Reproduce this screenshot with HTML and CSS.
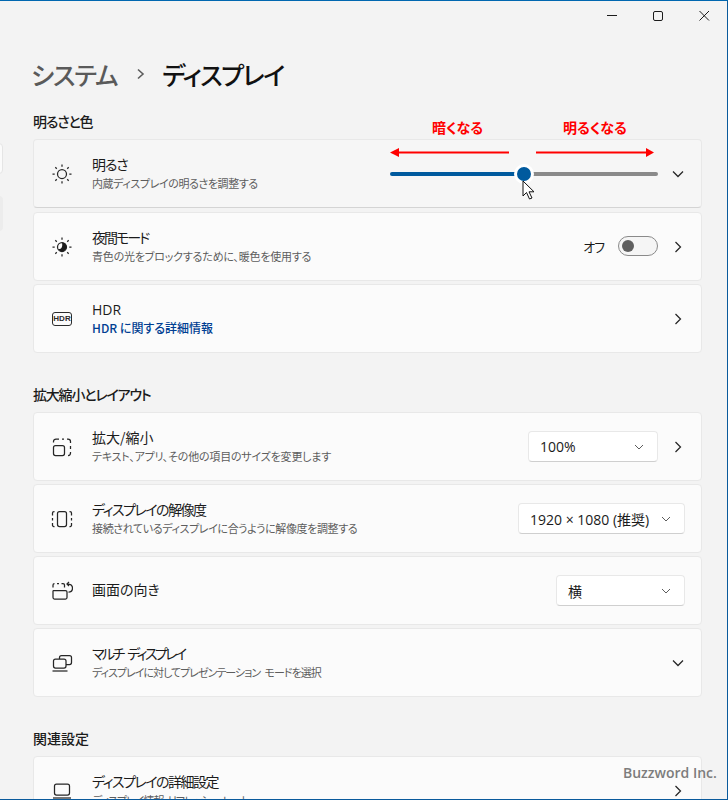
FILE: index.html
```html
<!DOCTYPE html>
<html lang="ja">
<head>
<meta charset="utf-8">
<title>ディスプレイ</title>
<link rel="stylesheet" href="styles.css">
</head>
<body>
<div class="window">
  <div class="side-a"></div>
  <div class="side-b"></div>
  <div class="titlebar">
    <svg class="wb" width="46" height="12" viewBox="0 0 46 12"><path d="M18 5.500h10" class="ln"/></svg>
    <svg class="wb" width="46" height="12" viewBox="0 0 46 12"><rect x="18.500" y="1.500" width="9" height="9" rx="1.500" class="ln"/></svg>
    <svg class="wb" width="46" height="12" viewBox="0 0 46 12"><path d="M18.500 1l9.500 9.500M28 1l-9.500 9.500" class="ln"/></svg>
  </div>
  <div class="crumb">
    <span class="crumb-parent">システム</span>
    <svg class="crumb-sep" width="10" height="12" viewBox="0 0 10 12"><path d="M2 1.500l5 4.500-5 4.500" class="ln2"/></svg>
    <span class="crumb-cur">ディスプレイ</span>
  </div>

  <h2 class="sec first k-sec1">明るさと色</h2>
  <div class="card card-hover">
    <svg class="ico" width="22" height="22" viewBox="0 0 22 22"><circle cx="11" cy="11" r="4.500" class="ic"/><path d="M11 1.500v2.200M11 18.300v2.200M1.500 11h2.200M18.300 11h2.200M4.300 4.300l1.500 1.500M16.200 16.200l1.500 1.500M4.300 17.700l1.500-1.500M16.200 5.800l1.500-1.500" class="ic"/></svg>
    <div class="txt"><div class="t k1">明るさ</div><div class="s k-s2">内蔵ディスプレイの明るさを調整する</div></div>
    <div class="slider">
      <div class="tr-on"></div><div class="tr-off"></div>
      <div class="thumb"></div>
    </div>
    <svg class="chev" width="12" height="12" viewBox="0 0 12 12"><path d="M1 3.500l5 5 5-5" class="ic"/></svg>
  </div>
  <div class="card">
    <svg class="ico" width="22" height="22" viewBox="0 0 22 22"><circle cx="11" cy="11" r="4.500" class="ic"/><path d="M11 6.500a4.500 4.500 0 0 1 0 9 4.500 4.500 0 0 1-4-2.500c3 .5 5-1.500 4-6.500z" fill="#1b1b1b"/><path d="M11 1.500v2.200M11 18.300v2.200M1.500 11h2.200M18.300 11h2.200M4.300 4.300l1.500 1.500M16.200 16.200l1.500 1.500M4.300 17.700l1.500-1.500M16.200 5.800l1.500-1.500" class="ic"/></svg>
    <div class="txt"><div class="t k2">夜間モード</div><div class="s k-s1">青色の光をブロックするために、暖色を使用する</div></div>
    <span class="off">オフ</span>
    <div class="toggle"><div class="knob"></div></div>
    <svg class="chev" width="12" height="12" viewBox="0 0 12 12"><path d="M3.500 1l5 5-5 5" class="ic"/></svg>
  </div>
  <div class="card">
    <div class="ico hdr">HDR</div>
    <div class="txt"><div class="t latin">HDR</div><div class="s link">HDR に関する詳細情報</div></div>
    <svg class="chev" width="12" height="12" viewBox="0 0 12 12"><path d="M3.500 1l5 5-5 5" class="ic"/></svg>
  </div>

  <h2 class="sec k-sec2">拡大縮小とレイアウト</h2>
  <div class="card">
    <svg class="ico" width="22" height="22" viewBox="0 0 22 22"><rect x="2.500" y="9.500" width="11" height="10" rx="2" class="ic"/><path d="M2.500 6.500v-1a2.500 2.500 0 0 1 2.500-2.500h3M11 3h2M16 3h1a2.500 2.500 0 0 1 2.500 2.500V7M19.500 10v3M19.500 16v1a2.500 2.500 0 0 1-2.500 2.500" class="ic"/></svg>
    <div class="txt"><div class="t">拡大/縮小</div><div class="s k-s1">テキスト、アプリ、その他の項目のサイズを変更します</div></div>
    <div class="dd dd-s"><span>100%</span><svg width="10" height="10" viewBox="0 0 10 10"><path d="M1 3l4 4 4-4" class="ic-g"/></svg></div>
    <svg class="chev" width="12" height="12" viewBox="0 0 12 12"><path d="M3.500 1l5 5-5 5" class="ic"/></svg>
  </div>
  <div class="card">
    <svg class="ico" width="22" height="22" viewBox="0 0 22 22"><rect x="6.500" y="3.500" width="9" height="15" rx="2" class="ic"/><path d="M3.500 3.500h-.5a1.500 1.500 0 0 0-1.500 1.500v2.500M1.500 10v2.500M1.500 15v1.500a1.500 1.500 0 0 0 1.500 2h.5M18.500 3.500h.5a1.500 1.500 0 0 1 1.500 1.500v2.500M20.500 10v2.500M20.500 15v1.500a1.500 1.500 0 0 1-1.500 2h-.5" class="ic"/></svg>
    <div class="txt"><div class="t k3">ディスプレイの解像度</div><div class="s k-s3">接続されているディスプレイに合うように解像度を調整する</div></div>
    <div class="dd dd-l"><span>1920 × 1080 (推奨)</span><svg width="10" height="10" viewBox="0 0 10 10"><path d="M1 3l4 4 4-4" class="ic-g"/></svg></div>
  </div>
  <div class="card card-dd">
    <svg class="ico" width="22" height="22" viewBox="0 0 22 22"><path d="M2.500 10.500h12a1.500 1.500 0 0 1 1.500 1.500v5.500a1.500 1.500 0 0 1-1.500 1.500h-11a1.500 1.500 0 0 1-1.500-1.500V11zM2 7.500V5a1.500 1.500 0 0 1 1.500-1.500M6 3.500h2M10.500 3.500h1.500a1.500 1.500 0 0 1 1.500 1.500v2.500M16.500 4c3.500 0 5 1.800 5 4s-1.500 4-4 4M18 2l-2 2 2 2" class="ic"/></svg>
    <div class="txt"><div class="t">画面の向き</div></div>
    <div class="dd dd-s"><span>横</span><svg width="10" height="10" viewBox="0 0 10 10"><path d="M1 3l4 4 4-4" class="ic-g"/></svg></div>
  </div>
  <div class="card">
    <svg class="ico" width="22" height="22" viewBox="0 0 22 22"><rect x="8.500" y="3.500" width="12" height="9" rx="2" class="ic"/><rect x="2.500" y="7" width="12.500" height="9" rx="2" class="ic fill"/><path d="M1.500 19h15" class="ic"/></svg>
    <div class="txt"><div class="t k4">マルチ ディスプレイ</div><div class="s k-s4">ディスプレイに対してプレゼンテーション モードを選択</div></div>
    <svg class="chev" width="12" height="12" viewBox="0 0 12 12"><path d="M1 3.500l5 5 5-5" class="ic"/></svg>
  </div>

  <h2 class="sec">関連設定</h2>
  <div class="card">
    <svg class="ico" width="22" height="22" viewBox="0 0 22 22"><rect x="3.500" y="4" width="15" height="11" rx="2" class="ic"/><path d="M2 18h18" class="ic"/></svg>
    <div class="txt"><div class="t k3">ディスプレイの詳細設定</div><div class="s k-s4">ディスプレイ情報、リフレッシュ レート</div></div>
    <svg class="chev" width="12" height="12" viewBox="0 0 12 12"><path d="M3.500 1l5 5-5 5" class="ic"/></svg>
  </div>

  <div class="note note-l">暗くなる</div>
  <div class="note note-r">明るくなる</div>
  <svg class="arrow arrow-l" width="120" height="10" viewBox="0 0 120 10"><path d="M119 3.500H9V0L0 4.500 9 9V5.500H119z" fill="#f00"/></svg>
  <svg class="arrow arrow-r" width="120" height="10" viewBox="0 0 120 10"><path d="M1 3.500h110V0l8 4.500-8 4.500V5.500H1z" fill="#f00"/></svg>
  <svg class="cursor" width="14" height="22" viewBox="0 0 14 22"><path d="M1 1v15l3.500-3.500 3 6.500 2.500-1-3-6.200h5z" fill="#fff" stroke="#111" stroke-width="1"/></svg>
  <div class="mark">Buzzword Inc.</div>
</div>
</body>
</html>
```
FILE: styles.css
```css
* { box-sizing: border-box; }
html, body { margin: 0; padding: 0; }
body {
  font-family: "Noto Sans CJK JP", sans-serif;
  font-feature-settings: "palt";
  color: #1b1b1b;
}
.window {
  position: relative;
  width: 728px;
  height: 800px;
  overflow: hidden;
  background: #f3f3f3;
  border-top: 1px solid #0067b0;
  border-right: 1px solid #0a5a9c;
  border-bottom: 1px solid #0a5a9c;
  padding-left: 33px;
}
.side-a {
  position: absolute; left: -6px; top: 142px; width: 9px; height: 31px;
  background: #fbfbfb; border: 1px solid #e5e5e5; border-radius: 4px;
}
.side-b {
  position: absolute; left: -6px; top: 195px; width: 9px; height: 35px;
  background: #ececec; border-radius: 4px;
}
.titlebar {
  display: flex; justify-content: flex-end; align-items: center;
  height: 30px;
}
.wb { display: block; }
.ln { fill: none; stroke: #1b1b1b; stroke-width: 1; }
.ln2 { fill: none; stroke: #5d5d5d; stroke-width: 1.6; }
.crumb {
  display: flex; align-items: center; height: 40px; margin-top: 23px; margin-left: -2px;
  font-size: 25px; font-weight: 500; line-height: 40px;
}
.crumb-parent { color: #5a5a5a; letter-spacing: -1.2px; }
.crumb-sep { margin: 0 16px 0 19px; }
.crumb-cur { color: #111; letter-spacing: -1.5px; }
.sec {
  margin: 31px 0 8px; height: 20px; line-height: 20px;
  font-size: 14px; font-weight: 500; color: #1b1b1b;
}
.sec.first { margin-top: 17px; }
.k-sec1 { letter-spacing: -1.2px; }
.k-sec2 { letter-spacing: -1.2px; }
.card {
  display: flex; align-items: center;
  width: 669px; height: 69px; margin-bottom: 3px;
  padding: 0 17px 0 17px;
  background: #fbfbfb;
  border: 1px solid #e8e8e8;
  border-radius: 4px;
}
.card-hover { background: #f6f6f6; margin-bottom: 4px; border-bottom-color: #d4d4d4; }
.ico { flex: none; display: block; width: 22px; height: 22px; margin-right: 19px; }
.ic { fill: none; stroke: #262626; stroke-width: 1.25; }
.ic.fill { fill: #fbfbfb; }
.ic-g { fill: none; stroke: #5d5d5d; stroke-width: 1; }
.hdr {
  width: 20px; height: 14px; margin: 0 20px 0 1px;
  border: 1.500px solid #2b2b2b; border-radius: 3px;
  font: 700 8px/11px "Liberation Sans", sans-serif;
  text-align: center; color: #2b2b2b;
}
.txt { flex: 1 1 auto; min-width: 0; }
.t { font-size: 14px; line-height: 17px; padding-bottom: 2px; color: #1b1b1b; white-space: nowrap; }
.t.latin { font-family: "Open Sans", sans-serif; }
.k1 { letter-spacing: -1.2px; }
.k2 { letter-spacing: -2px; }
.k3 { letter-spacing: -1.5px; }
.k4 { letter-spacing: -2.6px; word-spacing: 4px; }
.s { font-size: 11px; line-height: 16px; color: #5d5d5d; white-space: nowrap; }
.k-s1 { letter-spacing: -.2px; }
.k-s2 { letter-spacing: -.4px; }
.k-s3 { letter-spacing: -.37px; }
.k-s4 { letter-spacing: -1px; word-spacing: 3px; }
.s.link { font-size: 12px; font-weight: 500; color: #003e92; }
.slider {
  position: relative; flex: none; display: flex; align-items: center;
  width: 268px; height: 20px; margin-right: 14px;
}
.tr-on { width: 134px; height: 4px; background: #005a9e; border-radius: 2px 0 0 2px; }
.tr-off { flex: 1; height: 4px; background: #8a8a8a; border-radius: 0 2px 2px 0; }
.thumb {
  position: absolute; left: 124px; top: 0; width: 20px; height: 20px;
  border-radius: 50%; background: #005a9e; border: 3px solid #fff;
}
.chev { flex: none; display: block; }
.off { font-size: 13px; margin-right: 14px; letter-spacing: -1px; }
.toggle {
  flex: none; display: flex; align-items: center;
  width: 40px; height: 20px; padding-left: 3px; margin: -1px 14px 0 0;
  background: #f5f5f5; border: 1px solid #8a8a8a; border-radius: 10px;
}
.knob { width: 12px; height: 12px; border-radius: 50%; background: #5f5f5f; }
.dd {
  flex: none; display: flex; align-items: center; justify-content: space-between;
  height: 31px; padding: 0 13px 0 11px;
  background: #fff; border: 1px solid #e8e8e8; border-bottom-color: #cfcfcf;
  border-radius: 4px; font-size: 14px; color: #1b1b1b;
  font-family: "Open Sans", "Noto Sans CJK JP", sans-serif;
}
.dd-s { width: 130px; margin-right: 14px; }
.card-dd .dd-s { width: 129px; margin-right: -1px; }
.dd-l { width: 167px; margin-right: -1px; }
.note {
  position: absolute; top: 116px; font-size: 14px; font-weight: 700; line-height: 20px; color: #f00;
}
.note-l { left: 432px; }
.note-r { left: 563px; }
.arrow { position: absolute; top: 147px; display: block; }
.arrow-l { left: 390px; }
.arrow-r { left: 535px; }
.cursor { position: absolute; left: 522px; top: 179px; display: block; }
.mark {
  position: absolute; left: 623px; top: 762px;
  font: 600 14px/20px "Open Sans", sans-serif; color: #7d7d7d;
}
```
